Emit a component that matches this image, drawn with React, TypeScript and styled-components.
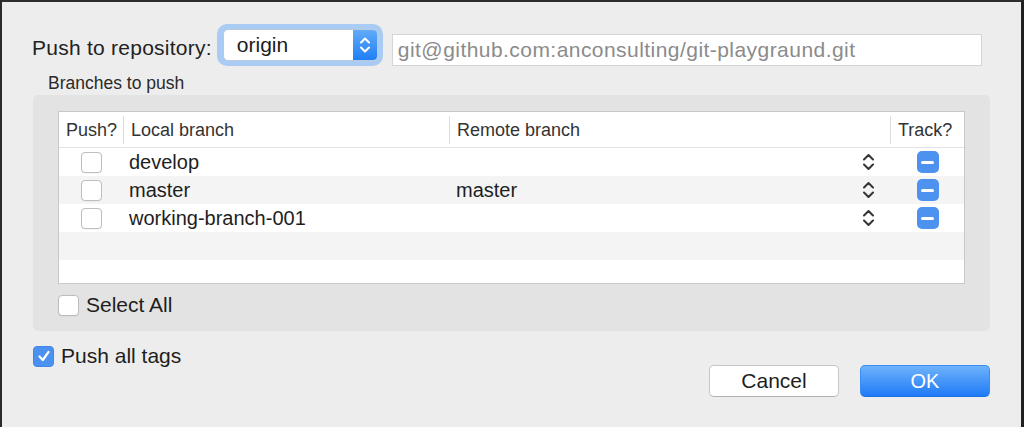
import React from "react";
import styled, { createGlobalStyle } from "styled-components";

const Global = createGlobalStyle`
  html, body { margin: 0; padding: 0; background: #ededed; }
  body {
    font-family: "Liberation Sans", Arial, Helvetica, sans-serif;
    color: #222;
    -webkit-font-smoothing: antialiased;
  }
  * { box-sizing: border-box; }
`;

const Window = styled.div`
  width: 1024px;
  height: 427px;
  background: #ededed;
  border-top: 2px solid #2d2d2d;
  border-left: 2px solid #2a2a2a;
  border-right: 3px solid #202020;
  padding: 22px 31px 0 31px;
  display: flex;
  flex-direction: column;
  overflow: hidden;
`;

const RepoRow = styled.div`
  display: flex;
  align-items: flex-start;
  height: 42px;
`;

const RepoLabel = styled.div`
  font-size: 21px;
  line-height: 24px;
  margin-top: 12px;
  margin-left: -1px;
  margin-right: 5px;
  letter-spacing: 0.25px;
  white-space: nowrap;
`;

const PopupRing = styled.div`
  width: 166px;
  height: 42px;
  padding: 5px 5px 5px 6px;
  border-radius: 10px;
  background: #a9cbf4;
  margin-right: 9px;
`;

const Popup = styled.div`
  height: 32px;
  display: flex;
  border-radius: 5px;
  border: 1px solid #b9c9de;
  overflow: hidden;
  background: #fff;
`;

const PopupValue = styled.div`
  flex: 1;
  font-size: 21px;
  line-height: 29px;
  padding-left: 13px;
  color: #1c1c1c;
`;

const PopupArrows = styled.div`
  width: 24px;
  display: flex;
  align-items: center;
  justify-content: center;
  background: linear-gradient(#62aaf8, #1f7ff6);
`;

const UrlField = styled.div`
  width: 590px;
  height: 32px;
  margin-top: 10px;
  background: #fff;
  border: 1px solid #d5d5d5;
  padding-left: 5px;
  font-size: 21px;
  line-height: 30px;
  letter-spacing: 0.45px;
  color: #8b8b8b;
  white-space: nowrap;
  overflow: hidden;
`;

const SectionLabel = styled.div`
  font-size: 17.5px;
  line-height: 20px;
  margin: 7px 0 2px 15px;
  color: #2a2a2a;
`;

const Group = styled.div`
  background: #e3e3e3;
  border-radius: 5px;
  padding: 16px 25px 15px 25px;
`;

const Table = styled.div`
  border: 1px solid #c8c8c8;
  background: #fff;
`;

const cols = "65px 326px 1fr 73px";

const HeaderRow = styled.div`
  display: grid;
  grid-template-columns: ${cols};
  height: 36px;
  align-items: center;
  border-bottom: 1px solid #e3e3e3;
`;

const HeaderCell = styled.div<{ $last?: boolean }>`
  height: 28px;
  line-height: 28px;
  padding-left: 7px;
  font-size: 18px;
  color: #333;
  border-right: ${(p) => (p.$last ? "none" : "1px solid #dcdcdc")};
  white-space: nowrap;
  overflow: hidden;
`;

const Row = styled.div<{ $striped?: boolean; $h?: number }>`
  display: grid;
  grid-template-columns: ${cols};
  height: ${(p) => p.$h ?? 28}px;
  align-items: center;
  background: ${(p) => (p.$striped ? "#f4f4f4" : "#fff")};
`;

const CenterCell = styled.div`
  display: flex;
  align-items: center;
  justify-content: center;
`;

const TextCell = styled.div<{ $pad: number }>`
  padding-left: ${(p) => p.$pad}px;
  font-size: 20px;
  line-height: 28px;
  color: #1e1e1e;
  white-space: nowrap;
`;

const RemoteCell = styled.div`
  display: flex;
  align-items: center;
  justify-content: space-between;
  padding-left: 6px;
  padding-right: 16px;
  font-size: 20px;
  line-height: 28px;
  color: #1e1e1e;
`;

const Checkbox = styled.div<{ $checked?: boolean }>`
  width: 21px;
  height: 21px;
  border-radius: 4px;
  flex: none;
  display: flex;
  align-items: center;
  justify-content: center;
  background: ${(p) => (p.$checked ? "#4b91ef" : "#fff")};
  border: 1px solid ${(p) => (p.$checked ? "#4187ea" : "#bdbdbd")};
  box-shadow: ${(p) => (p.$checked ? "none" : "0 0.5px 0.5px rgba(0,0,0,0.08)")};
`;

const MinusButton = styled.div`
  width: 22px;
  height: 22px;
  border-radius: 5px;
  background: #4d92ef;
  display: flex;
  align-items: center;
  justify-content: center;
`;

const MinusBar = styled.div`
  width: 13px;
  height: 3px;
  border-radius: 1.5px;
  background: #fff;
`;

const CheckRow = styled.div<{ $top: number }>`
  display: flex;
  align-items: center;
  gap: 7px;
  margin-top: ${(p) => p.$top}px;
  font-size: 21px;
  line-height: 22px;
  color: #1e1e1e;
`;

const Footer = styled.div`
  display: flex;
  justify-content: space-between;
  align-items: flex-start;
  margin-top: 14px;
`;

const Buttons = styled.div`
  display: flex;
  gap: 21px;
  margin-top: 20px;
`;

const Button = styled.div<{ $primary?: boolean }>`
  width: 130px;
  height: 32px;
  border-radius: 5px;
  display: flex;
  align-items: center;
  justify-content: center;
  font-size: ${(p) => (p.$primary ? 20 : 21)}px;
  color: ${(p) => (p.$primary ? "#fff" : "#1e1e1e")};
  background: ${(p) =>
    p.$primary ? "linear-gradient(#6eb2fa, #1f7bf6)" : "#fff"};
  border: 1px solid ${(p) => (p.$primary ? "#3d8cf3" : "#c6c6c6")};
  border-bottom-color: ${(p) => (p.$primary ? "#1a6fe6" : "#b0b0b0")};
`;

const Stepper = () => (
  <svg width="13" height="20" viewBox="0 0 13 20" fill="none">
    <path d="M2 7.5 L6.5 3 L11 7.5" stroke="#333" strokeWidth="2" strokeLinecap="round" strokeLinejoin="round" />
    <path d="M2 12.5 L6.5 17 L11 12.5" stroke="#333" strokeWidth="2" strokeLinecap="round" strokeLinejoin="round" />
  </svg>
);

const PopupChevrons = () => (
  <svg width="12" height="20" viewBox="0 0 12 20" fill="none">
    <path d="M2 7.5 L6 3.5 L10 7.5" stroke="#fff" strokeWidth="2" strokeLinecap="round" strokeLinejoin="round" />
    <path d="M2 12.5 L6 16.5 L10 12.5" stroke="#fff" strokeWidth="2" strokeLinecap="round" strokeLinejoin="round" />
  </svg>
);

const CheckMark = () => (
  <svg width="14" height="14" viewBox="0 0 14 14" fill="none">
    <path d="M2.5 7.5 L5.8 11 L11.5 3" stroke="#fff" strokeWidth="2.2" strokeLinecap="round" strokeLinejoin="round" />
  </svg>
);

const branches = [
  { local: "develop", remote: "" },
  { local: "master", remote: "master" },
  { local: "working-branch-001", remote: "" },
];

export default function App() {
  return (
    <>
      <Global />
      <Window>
        <RepoRow>
          <RepoLabel>Push to repository:</RepoLabel>
          <PopupRing>
            <Popup>
              <PopupValue>origin</PopupValue>
              <PopupArrows>
                <PopupChevrons />
              </PopupArrows>
            </Popup>
          </PopupRing>
          <UrlField>git@github.com:anconsulting/git-playgraund.git</UrlField>
        </RepoRow>

        <SectionLabel>Branches to push</SectionLabel>
        <Group>
          <Table>
            <HeaderRow>
              <HeaderCell>Push?</HeaderCell>
              <HeaderCell>Local branch</HeaderCell>
              <HeaderCell>Remote branch</HeaderCell>
              <HeaderCell $last>Track?</HeaderCell>
            </HeaderRow>
            {branches.map((b, i) => (
              <Row key={b.local} $striped={i % 2 === 1}>
                <CenterCell>
                  <Checkbox />
                </CenterCell>
                <TextCell $pad={5}>{b.local}</TextCell>
                <RemoteCell>
                  <span>{b.remote}</span>
                  <Stepper />
                </RemoteCell>
                <CenterCell>
                  <MinusButton>
                    <MinusBar />
                  </MinusButton>
                </CenterCell>
              </Row>
            ))}
            <Row $striped />
            <Row $h={23} />
          </Table>
          <CheckRow $top={10}>
            <Checkbox />
            <span>Select All</span>
          </CheckRow>
        </Group>

        <Footer>
          <CheckRow $top={0}>
            <Checkbox $checked>
              <CheckMark />
            </Checkbox>
            <span>Push all tags</span>
          </CheckRow>
          <Buttons>
            <Button>Cancel</Button>
            <Button $primary>OK</Button>
          </Buttons>
        </Footer>
      </Window>
    </>
  );
}
